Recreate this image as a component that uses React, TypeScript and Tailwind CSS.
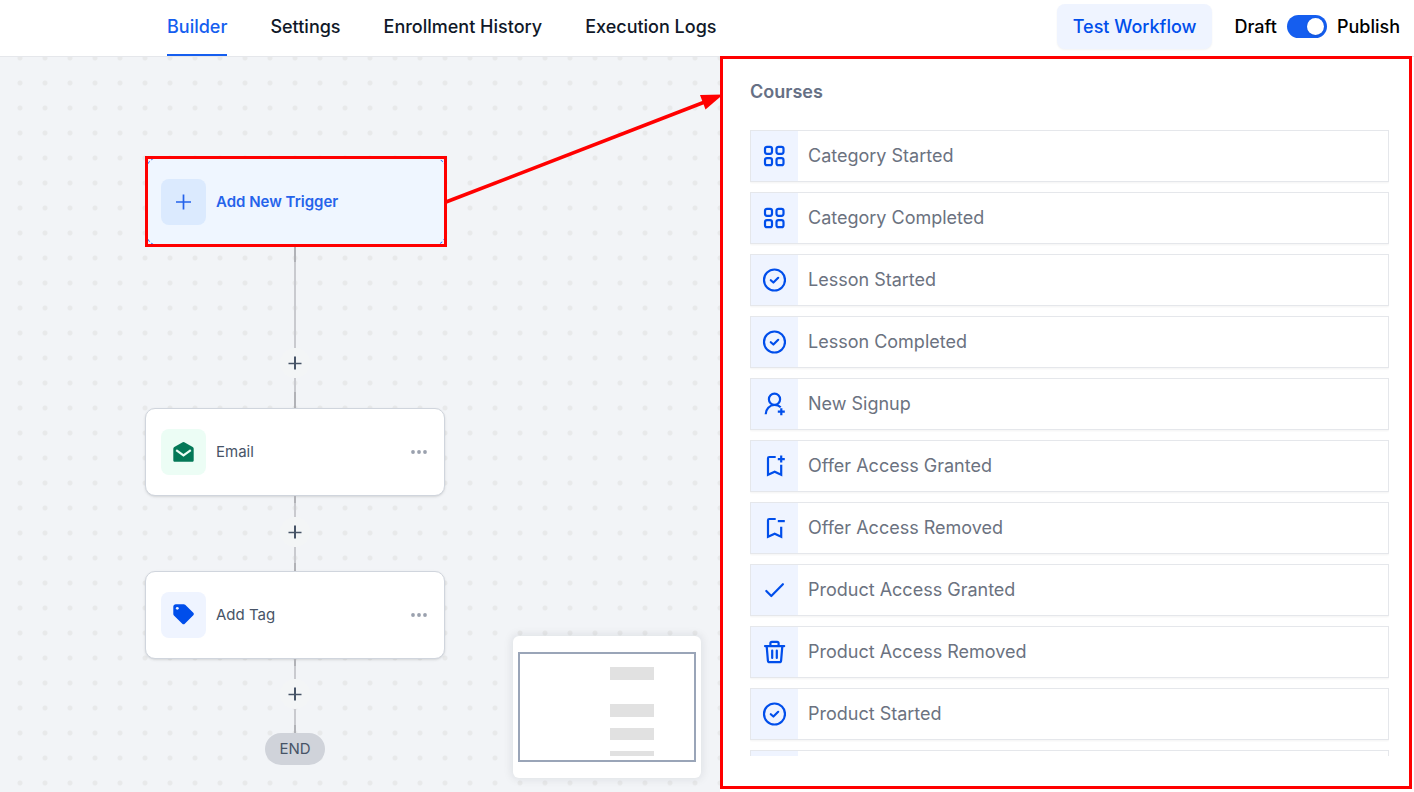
import React, { useState } from 'react'

const tabs = ['Builder', 'Settings', 'Enrollment History', 'Execution Logs']

const triggers = [
  { label: 'Category Started', icon: 'grid' },
  { label: 'Category Completed', icon: 'grid' },
  { label: 'Lesson Started', icon: 'circleCheck' },
  { label: 'Lesson Completed', icon: 'circleCheck' },
  { label: 'New Signup', icon: 'userPlus' },
  { label: 'Offer Access Granted', icon: 'bookmarkPlus' },
  { label: 'Offer Access Removed', icon: 'bookmarkMinus' },
  { label: 'Product Access Granted', icon: 'check' },
  { label: 'Product Access Removed', icon: 'trash' },
  { label: 'Product Started', icon: 'circleCheck' },
  { label: '', icon: '' },
]

const iconPaths: Record<string, React.ReactNode> = {
  grid: (
    <>
      <rect x="3" y="2.8" width="7" height="7" rx="2" />
      <rect x="14.5" y="2.8" width="7" height="7" rx="2" />
      <rect x="3" y="14.2" width="7" height="7" rx="2" />
      <rect x="14.5" y="14.2" width="7" height="7" rx="2" />
    </>
  ),
  circleCheck: (
    <>
      <circle cx="12.5" cy="12" r="10.5" />
      <path d="M8.8 12.2l2.6 2.3 4.8-4.7" />
    </>
  ),
  userPlus: (
    <>
      <circle cx="12.5" cy="7.3" r="5.6" />
      <path d="M3.7 22.2c0-5.2 3.9-9.2 8.8-9.2 2.4 0 4.6.7 6.2 2.2" strokeLinecap="butt" />
      <path d="M19.3 16.2v7M15.8 19.7h7" strokeLinecap="butt" />
    </>
  ),
  bookmarkPlus: (
    <>
      <path d="M13.7 3H7.2A1.2 1.2 0 0 0 6 4.2v16.6l6.7-3 6.5 3V10.7" strokeLinecap="butt" strokeLinejoin="miter" />
      <path d="M19.2 1.6v7M15.8 5.1h7" strokeLinecap="butt" />
    </>
  ),
  bookmarkMinus: (
    <>
      <path d="M13.7 3H7.2A1.2 1.2 0 0 0 6 4.2v16.6l6.7-3 6.5 3V10.7" strokeLinecap="butt" strokeLinejoin="miter" />
      <path d="M15.8 5.1h7" strokeLinecap="butt" />
    </>
  ),
  check: <path d="M4.3 13l5 5L20.9 6.2" />,
  trash: (
    <>
      <path d="M3 6.1h19.2M8.4 6V3.3c0-.9.6-1.5 1.5-1.5h5.2c.9 0 1.5.6 1.5 1.5V6" />
      <path d="M4.7 6.3l1.2 14.3c.1 1 .8 1.6 1.8 1.6h9.6c1 0 1.7-.6 1.8-1.6l1.2-14.3" />
      <path d="M10.2 10.5v7.5M14.8 10.5v7.5" />
    </>
  ),
}

const TriggerIcon = ({ name }: { name: string }) => (
  <svg
    className="size-6"
    viewBox="0 0 24 24"
    fill="none"
    stroke="#004eeb"
    strokeWidth="2.2"
    strokeLinecap="round"
    strokeLinejoin="round"
    aria-hidden="true"
  >
    {iconPaths[name]}
  </svg>
)

const MailIcon = () => (
  <svg className="size-6" viewBox="0 0 24 24" aria-hidden="true">
    <path
      d="M11.7 2.2a1.6 1.6 0 0 1 1.6 0l8.4 4.9c.6.4 1 1 1 1.7v11.4c0 .9-.7 1.6-1.6 1.6H3.9c-.9 0-1.6-.7-1.6-1.6V8.8c0-.7.4-1.3 1-1.7z"
      fill="#047857"
    />
    <path d="M5.2 10.2l7.3 5.2 7.3-5.2" fill="none" stroke="#ecfdf5" strokeWidth="2.2" />
  </svg>
)

const TagIcon = () => (
  <svg className="size-6" viewBox="0 0 24 24" aria-hidden="true">
    <path
      d="M4.8 1.2h7.9c.6 0 1.1.2 1.5.6l8.1 8c.7.7.7 1.8 0 2.5l-8.5 8.5c-.7.7-1.8.7-2.5 0l-8.4-8.4c-.4-.4-.6-.9-.6-1.5V3.7c0-1.4 1.1-2.5 2.5-2.5z"
      fill="#004eeb"
    />
    <circle cx="6.3" cy="5.3" r="1.4" fill="#eff4ff" />
  </svg>
)

const PlusIcon = () => (
  <svg className="size-4" viewBox="0 0 16 16" fill="none" stroke="currentColor" strokeWidth="1.7" aria-hidden="true">
    <path d="M8.5 0.5v15M1 8h15" />
  </svg>
)

interface ConnectorProps {
  top: string
  bottom: string
}

// line, add button, line
const Connector = ({ top, bottom }: ConnectorProps) => (
  <div className="flex flex-col items-center">
    <div className={`w-0.5 ${top}`} />
    <button
      aria-label="Add step"
      className="flex size-[30px] items-center justify-center rounded-full bg-[#f3f5f6] text-[#475467]"
    >
      <svg className="size-[14px]" viewBox="0 0 14 14" fill="none" stroke="currentColor" aria-hidden="true">
        <path d="M7 0.5v13" strokeWidth="2" />
        <path d="M0.5 7.5h13" strokeWidth="1.5" />
      </svg>
    </button>
    <div className={`w-0.5 ${bottom}`} />
  </div>
)

interface StepCardProps {
  label: string
  tint: string
  children: React.ReactNode
}

const StepCard = ({ label, tint, children }: StepCardProps) => (
  <div className="flex h-[88px] w-[300px] items-center gap-[10px] rounded-[10px] border border-[#d0d5dd] bg-white pr-4 pl-[15px] shadow-sm">
    <div className={`flex h-[46px] w-[45px] items-center justify-center rounded-lg pr-px ${tint}`}>{children}</div>
    <span className="flex-1 text-[15px] text-[#475467]">{label}</span>
    <button aria-label={`${label} options`}>
      <svg className="h-4 w-[18px]" viewBox="0 0 18 16" fill="#9aa1ae" aria-hidden="true">
        <circle cx="3" cy="8" r="1.9" />
        <circle cx="9" cy="8" r="1.9" />
        <circle cx="15" cy="8" r="1.9" />
      </svg>
    </button>
  </div>
)

const MiniMap = () => (
  <div className="absolute right-[19px] bottom-[14px] rounded-md bg-white px-[5px] py-4 shadow-[0_0_8px_2px_rgba(16,24,40,0.08)]">
    <svg className="h-[110px] w-[178px]" viewBox="0 0 178 110" aria-hidden="true">
      <rect x="1" y="1" width="176" height="108" fill="none" stroke="#9aa5b8" strokeWidth="2" />
      <g fill="#e1e1e1">
        <rect x="92" y="15" width="44" height="13" />
        <rect x="92" y="52" width="44" height="13" />
        <rect x="92" y="76" width="44" height="12" />
        <rect x="92" y="99" width="44" height="5" />
      </g>
    </svg>
  </div>
)

const App = () => {
  const [activeTab, setActiveTab] = useState('Builder')
  const [published, setPublished] = useState(true)

  return (
    <div className="flex h-screen flex-col bg-white font-['Inter',sans-serif]">
      <header className="flex h-[57px] shrink-0 items-start justify-between border-b border-[#e5e7eb] pr-[14px] pl-[167px]">
        <nav className="flex h-14 gap-[43px]">
          {tabs.map((tab) => (
            <button
              key={tab}
              onClick={() => setActiveTab(tab)}
              className={`border-b-2 text-lg font-medium ${
                tab === activeTab ? 'border-[#155eef] text-[#155eef]' : 'border-transparent text-[#101828]'
              }`}
            >
              {tab}
            </button>
          ))}
        </nav>
        <div className="flex items-center pt-1">
          <button className="mr-[22px] h-[45px] rounded-lg bg-[#eff4ff] px-4 text-lg font-medium text-[#004eeb] shadow-xs">
            Test Workflow
          </button>
          <label className="flex items-center gap-[10px] text-lg font-medium text-black">
            Draft
            <input
              type="checkbox"
              role="switch"
              checked={published}
              onChange={(e) => setPublished(e.target.checked)}
              className="flex h-[23px] w-10 appearance-none items-center rounded-full bg-gray-300 px-[3px] before:size-[17px] before:rounded-full before:bg-white before:shadow-sm checked:justify-end checked:bg-[#155eef]"
            />
            Publish
          </label>
        </div>
      </header>

      <main className="relative grid min-h-0 flex-1 grid-cols-[720fr_694fr]">
        <section className="relative overflow-hidden bg-[#f2f4f7] bg-[radial-gradient(circle_at_12px_12px,#e8e9ea_2px,transparent_3px)] bg-[length:25px_25px] bg-[position:8px_-11px] pt-[99px] pl-[145px]">
          <div className="flex w-[300px] flex-col items-center">
            <div className="relative w-[302px] self-start">
              <button className="flex h-[91px] w-full items-center gap-[10px] rounded-2xl border border-dashed border-[#2970ff] bg-[#eff6ff] px-[15px] text-left text-[15px] leading-[23px] font-semibold text-[#2563eb]">
                <span className="flex h-[46px] w-[45px] items-center justify-center rounded-lg bg-[#dbeafe] pr-px">
                  <PlusIcon />
                </span>
                Add New Trigger
              </button>
              <div className="pointer-events-none absolute inset-0 border-[3px] border-[#ff0000]" />
            </div>
            <Connector
              top="h-[101px] bg-[linear-gradient(#b1b2b7_15px,#c9cacf_15px)]"
              bottom="h-[30px] bg-[linear-gradient(#c9cacf_14px,#b1b2b7_14px)]"
            />
            <StepCard label="Email" tint="bg-[#ecfdf5]">
              <MailIcon />
            </StepCard>
            <Connector
              top="h-[21px] bg-[linear-gradient(#b1b2b7_7px,#c9cacf_7px)]"
              bottom="h-6 bg-[linear-gradient(#c9cacf_16px,#b1b2b7_16px)]"
            />
            <StepCard label="Add Tag" tint="bg-[#eff4ff]">
              <TagIcon />
            </StepCard>
            <Connector
              top="h-5 bg-[linear-gradient(#b1b2b7_7px,#c9cacf_7px)]"
              bottom="h-6 bg-[linear-gradient(#c9cacf_16px,#b1b2b7_16px)]"
            />
            <div className="flex h-8 w-[60px] items-center justify-center rounded-full bg-[#d0d3da] text-[15px] text-[#475467]">
              END
            </div>
          </div>
          <MiniMap />
        </section>

        <aside className="z-10 -mt-px mr-0.5 mb-[3px] flex min-h-0 flex-col border-[3px] border-[#ff0000] bg-white pt-[19px] pr-5 pb-[30px] pl-[27px]">
          <h2 className="text-lg font-semibold text-[#667085]">Courses</h2>
          <ul className="mt-6 flex min-h-0 flex-1 flex-col gap-[10px] overflow-y-auto [scrollbar-width:none]">
            {triggers.map((trigger, i) => (
              <li key={i} className="shrink-0">
                <button className="flex h-[52px] w-full items-stretch border border-[#e5e7eb] text-left shadow-xs">
                  <span className="flex w-[47px] items-center justify-center bg-[#eff4ff] pr-px">
                    <TriggerIcon name={trigger.icon} />
                  </span>
                  <span className="self-center pl-[10px] text-lg text-[#6b7280]">{trigger.label}</span>
                </button>
              </li>
            ))}
          </ul>
        </aside>

        {/* arrow from the trigger card to the list */}
        <svg
          className="pointer-events-none absolute top-[29px] left-[446px] z-20 h-[124px] w-[280px]"
          viewBox="0 0 280 124"
          aria-hidden="true"
        >
          <path d="M0 116L260 15.5" stroke="#ff0000" strokeWidth="3.5" />
          <path d="M277 8.5L254 9l5.5 14.5z" fill="#ff0000" />
        </svg>
      </main>
    </div>
  )
}

export default App
